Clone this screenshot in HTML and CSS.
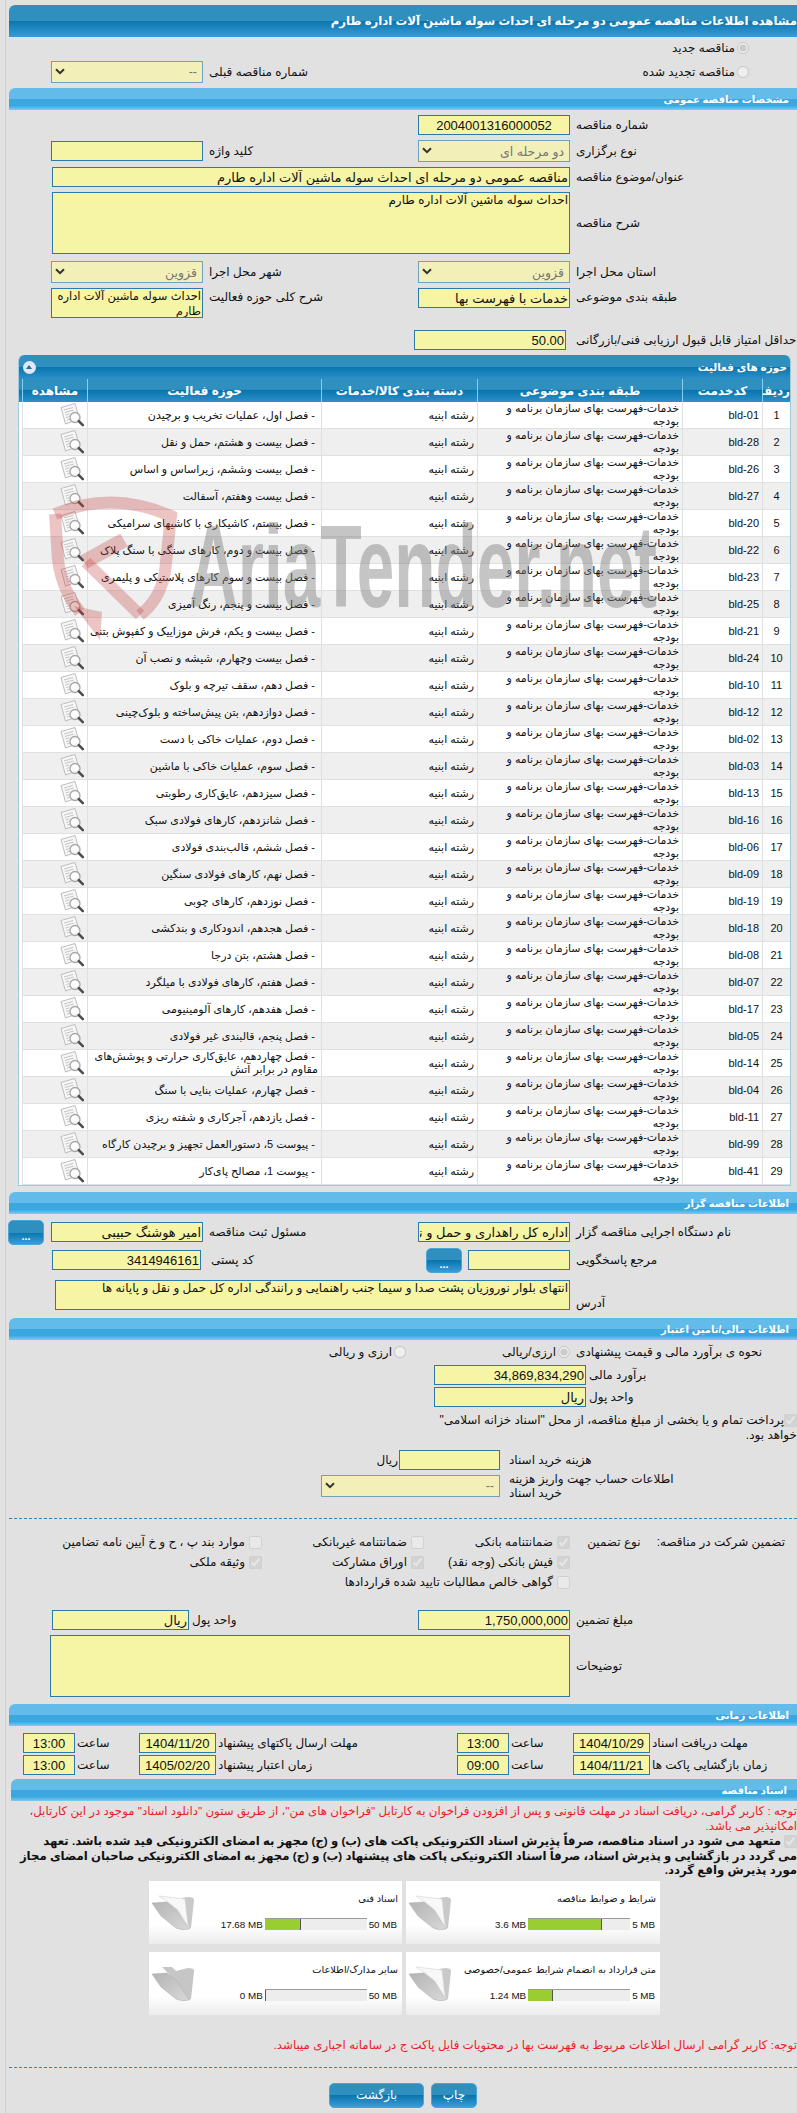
FILE: index.html
```html
<!DOCTYPE html>
<html lang="fa" dir="rtl">
<head>
<meta charset="utf-8">
<title>مشاهده اطلاعات مناقصه</title>
<link rel="stylesheet" href="styles.css">
</head>
<body>
<svg class="defs" width="0" height="0" aria-hidden="true">
  <defs>
    <linearGradient id="leaf" x1="0" y1="0" x2="1" y2="1"><stop offset="0" stop-color="#b4b4b4"/><stop offset="1" stop-color="#d8d8d8"/></linearGradient>
    <symbol id="mag" viewBox="0 0 24 24">
      <path d="M1 4.500 15 .5l4.500 15.500L5.500 21z" fill="#f7f7f7" stroke="#bdbdbd"/>
      <path d="M4 7l9-2.500M4.800 9.500l9-2.500M5.500 12l4-1.200M6.200 14.500l3-.8M7 17l3-.8" stroke="#c4c4c4" fill="none"/>
      <circle cx="15" cy="14.500" r="5" fill="#ffffff" fill-opacity=".75" stroke="#a5a5a5" stroke-width="1.300"/>
      <path d="M18.800 18.200l4 4" stroke="#4c4c4c" stroke-width="2.600" stroke-linecap="round"/>
    </symbol>
    <symbol id="folder" viewBox="0 0 42 38">
      <path d="M30 4l6-1q6 0 6 3l-3 28-2 1z" fill="#c9c9c9"/>
      <path d="M7 2l26 3 3 27-10-16L16 8z" fill="#f8f8f8" stroke="#d4d4d4" stroke-width=".6"/>
      <path d="M0 9l15-1 10 8 12 19q-7 2-13-1L9 22z" fill="url(#leaf)" stroke="#aaa" stroke-width=".5"/>
    </symbol>
    <symbol id="folder-empty" viewBox="0 0 42 38">
      <path d="M10 2h10l4 4 12-3q7 0 6 4l-3 27-2 1L16 8z" fill="#c6c6c6"/>
      <path d="M0 9l15-1 10 8 12 19q-7 2-13-1L9 22z" fill="url(#leaf)" stroke="#aaa" stroke-width=".5"/>
    </symbol>
    <symbol id="chev" viewBox="0 0 10 7">
      <path d="M1 1.200 5 5.200l4-4" fill="none" stroke="#333" stroke-width="2"/>
    </symbol>
  </defs>
</svg>

<div class="page">
  <h1 class="title-bar">مشاهده اطلاعات مناقصه عمومی دو مرحله ای احداث سوله ماشین آلات اداره طارم</h1>

  <div class="row mt1 h20">
    <label class="opt opt-top"><input type="radio" name="tn" checked disabled><span>مناقصه جدید</span></label>
  </div>
  <div class="row mt3 h22">
    <label class="opt opt-top"><input type="radio" name="tn" disabled><span>مناقصه تجدید شده</span></label>
    <span class="lbl lbl-prev">شماره مناقصه قبلی</span>
    <div class="sel w152 gap6"><span>--</span><svg class="chev"><use href="#chev"/></svg></div>
  </div>

  <h2 class="bar mt-bar5">مشخصات مناقصه عمومی</h2>

  <div class="row mt5 h20">
    <span class="lbl lbl-r">شماره مناقصه</span>
    <input class="fld w152 gap6 center" value="2004001316000052" readonly>
  </div>
  <div class="row mt5 h22">
    <span class="lbl lbl-r">نوع برگزاری</span>
    <div class="sel w152 gap6"><span>دو مرحله ای</span><svg class="chev"><use href="#chev"/></svg></div>
    <span class="lbl lbl-l">کلید واژه</span>
    <input class="fld w152 gap6" value="" readonly>
  </div>
  <div class="row mt5 h20">
    <span class="lbl lbl-r">عنوان/موضوع مناقصه</span>
    <input class="fld w518 gap6" value="مناقصه عمومی دو مرحله ای احداث سوله ماشین آلات اداره طارم" readonly>
  </div>
  <div class="row mt5 h62">
    <span class="lbl lbl-r">شرح مناقصه</span>
    <textarea class="fld area w518 gap6" readonly>احداث سوله ماشین آلات اداره طارم</textarea>
  </div>
  <div class="row mt7 h22">
    <span class="lbl lbl-r">استان محل اجرا</span>
    <div class="sel w152 gap6"><span>قزوین</span><svg class="chev"><use href="#chev"/></svg></div>
    <span class="lbl lbl-l">شهر محل اجرا</span>
    <div class="sel w152 gap6"><span>قزوین</span><svg class="chev"><use href="#chev"/></svg></div>
  </div>
  <div class="row mt5 h30 top">
    <span class="lbl lbl-r lbl-top">طبقه بندی موضوعی</span>
    <input class="fld w152 gap6" value="خدمات با فهرست بها" readonly>
    <span class="lbl lbl-l lbl-top">شرح کلی حوزه فعالیت</span>
    <textarea class="fld area small w152 h30 gap6" readonly>احداث سوله ماشین آلات اداره طارم</textarea>
  </div>
  <div class="row mt12 h20">
    <span class="lbl lbl-r">حداقل امتیاز قابل قبول ارزیابی فنی/بازرگانی</span>
    <input class="fld w152 gap10" value="50.00" readonly>
  </div>

  <section class="panel">
    <div class="panel-title">
      <span>حوزه های فعالیت</span>
      <span class="toggle"></span>
    </div>
    <table class="grid">
      <colgroup><col class="c1"><col class="c2"><col class="c3"><col class="c4"><col class="c5"><col class="c6"></colgroup>
      <thead><tr><th>ردیف</th><th>کدخدمت</th><th>طبقه بندی موضوعی</th><th>دسته بندی کالا/خدمات</th><th>حوزه فعالیت</th><th>مشاهده</th></tr></thead>
      <tbody>
        <tr><td class="n">1</td><td class="k">bld-01</td><td>خدمات-فهرست بهای سازمان برنامه و بودجه</td><td>رشته ابنیه</td><td>&nbsp;- فصل اول، عملیات تخریب و برچیدن</td><td class="v"><svg class="mag"><use href="#mag"/></svg></td></tr>
        <tr><td class="n">2</td><td class="k">bld-28</td><td>خدمات-فهرست بهای سازمان برنامه و بودجه</td><td>رشته ابنیه</td><td>&nbsp;- فصل بیست و هشتم، حمل و نقل</td><td class="v"><svg class="mag"><use href="#mag"/></svg></td></tr>
        <tr><td class="n">3</td><td class="k">bld-26</td><td>خدمات-فهرست بهای سازمان برنامه و بودجه</td><td>رشته ابنیه</td><td>&nbsp;- فصل بیست وششم، زیراساس و اساس</td><td class="v"><svg class="mag"><use href="#mag"/></svg></td></tr>
        <tr><td class="n">4</td><td class="k">bld-27</td><td>خدمات-فهرست بهای سازمان برنامه و بودجه</td><td>رشته ابنیه</td><td>&nbsp;- فصل بیست وهفتم، آسفالت</td><td class="v"><svg class="mag"><use href="#mag"/></svg></td></tr>
        <tr><td class="n">5</td><td class="k">bld-20</td><td>خدمات-فهرست بهای سازمان برنامه و بودجه</td><td>رشته ابنیه</td><td>&nbsp;- فصل بیستم، کاشیکاری با کاشیهای سرامیکی</td><td class="v"><svg class="mag"><use href="#mag"/></svg></td></tr>
        <tr><td class="n">6</td><td class="k">bld-22</td><td>خدمات-فهرست بهای سازمان برنامه و بودجه</td><td>رشته ابنیه</td><td>&nbsp;- فصل بیست و دوم، کارهای سنگی با سنگ پلاک</td><td class="v"><svg class="mag"><use href="#mag"/></svg></td></tr>
        <tr><td class="n">7</td><td class="k">bld-23</td><td>خدمات-فهرست بهای سازمان برنامه و بودجه</td><td>رشته ابنیه</td><td>&nbsp;- فصل بیست و سوم کارهای پلاستیکی و پلیمری</td><td class="v"><svg class="mag"><use href="#mag"/></svg></td></tr>
        <tr><td class="n">8</td><td class="k">bld-25</td><td>خدمات-فهرست بهای سازمان برنامه و بودجه</td><td>رشته ابنیه</td><td>&nbsp;- فصل بیست و پنجم، رنگ آمیزی</td><td class="v"><svg class="mag"><use href="#mag"/></svg></td></tr>
        <tr><td class="n">9</td><td class="k">bld-21</td><td>خدمات-فهرست بهای سازمان برنامه و بودجه</td><td>رشته ابنیه</td><td>&nbsp;- فصل بیست و یکم، فرش موزاییک و کفپوش بتنی</td><td class="v"><svg class="mag"><use href="#mag"/></svg></td></tr>
        <tr><td class="n">10</td><td class="k">bld-24</td><td>خدمات-فهرست بهای سازمان برنامه و بودجه</td><td>رشته ابنیه</td><td>&nbsp;- فصل بیست وچهارم، شیشه و نصب آن</td><td class="v"><svg class="mag"><use href="#mag"/></svg></td></tr>
        <tr><td class="n">11</td><td class="k">bld-10</td><td>خدمات-فهرست بهای سازمان برنامه و بودجه</td><td>رشته ابنیه</td><td>&nbsp;- فصل دهم، سقف تیرچه و بلوک</td><td class="v"><svg class="mag"><use href="#mag"/></svg></td></tr>
        <tr><td class="n">12</td><td class="k">bld-12</td><td>خدمات-فهرست بهای سازمان برنامه و بودجه</td><td>رشته ابنیه</td><td>&nbsp;- فصل دوازدهم، بتن پیش‌ساخته و بلوک‌چینی</td><td class="v"><svg class="mag"><use href="#mag"/></svg></td></tr>
        <tr><td class="n">13</td><td class="k">bld-02</td><td>خدمات-فهرست بهای سازمان برنامه و بودجه</td><td>رشته ابنیه</td><td>&nbsp;- فصل دوم، عملیات خاکی با دست</td><td class="v"><svg class="mag"><use href="#mag"/></svg></td></tr>
        <tr><td class="n">14</td><td class="k">bld-03</td><td>خدمات-فهرست بهای سازمان برنامه و بودجه</td><td>رشته ابنیه</td><td>&nbsp;- فصل سوم، عملیات خاکی با ماشین</td><td class="v"><svg class="mag"><use href="#mag"/></svg></td></tr>
        <tr><td class="n">15</td><td class="k">bld-13</td><td>خدمات-فهرست بهای سازمان برنامه و بودجه</td><td>رشته ابنیه</td><td>&nbsp;- فصل سیزدهم، عایق‌کاری رطوبتی</td><td class="v"><svg class="mag"><use href="#mag"/></svg></td></tr>
        <tr><td class="n">16</td><td class="k">bld-16</td><td>خدمات-فهرست بهای سازمان برنامه و بودجه</td><td>رشته ابنیه</td><td>&nbsp;- فصل شانزدهم، کارهای فولادی سبک</td><td class="v"><svg class="mag"><use href="#mag"/></svg></td></tr>
        <tr><td class="n">17</td><td class="k">bld-06</td><td>خدمات-فهرست بهای سازمان برنامه و بودجه</td><td>رشته ابنیه</td><td>&nbsp;- فصل ششم، قالب‌بندی فولادی</td><td class="v"><svg class="mag"><use href="#mag"/></svg></td></tr>
        <tr><td class="n">18</td><td class="k">bld-09</td><td>خدمات-فهرست بهای سازمان برنامه و بودجه</td><td>رشته ابنیه</td><td>&nbsp;- فصل نهم، کارهای فولادی سنگین</td><td class="v"><svg class="mag"><use href="#mag"/></svg></td></tr>
        <tr><td class="n">19</td><td class="k">bld-19</td><td>خدمات-فهرست بهای سازمان برنامه و بودجه</td><td>رشته ابنیه</td><td>&nbsp;- فصل نوزدهم، کارهای چوبی</td><td class="v"><svg class="mag"><use href="#mag"/></svg></td></tr>
        <tr><td class="n">20</td><td class="k">bld-18</td><td>خدمات-فهرست بهای سازمان برنامه و بودجه</td><td>رشته ابنیه</td><td>&nbsp;- فصل هجدهم، اندودکاری و بندکشی</td><td class="v"><svg class="mag"><use href="#mag"/></svg></td></tr>
        <tr><td class="n">21</td><td class="k">bld-08</td><td>خدمات-فهرست بهای سازمان برنامه و بودجه</td><td>رشته ابنیه</td><td>&nbsp;- فصل هشتم، بتن درجا</td><td class="v"><svg class="mag"><use href="#mag"/></svg></td></tr>
        <tr><td class="n">22</td><td class="k">bld-07</td><td>خدمات-فهرست بهای سازمان برنامه و بودجه</td><td>رشته ابنیه</td><td>&nbsp;- فصل هفتم، کارهای فولادی با میلگرد</td><td class="v"><svg class="mag"><use href="#mag"/></svg></td></tr>
        <tr><td class="n">23</td><td class="k">bld-17</td><td>خدمات-فهرست بهای سازمان برنامه و بودجه</td><td>رشته ابنیه</td><td>&nbsp;- فصل هفدهم، کارهای آلومینیومی</td><td class="v"><svg class="mag"><use href="#mag"/></svg></td></tr>
        <tr><td class="n">24</td><td class="k">bld-05</td><td>خدمات-فهرست بهای سازمان برنامه و بودجه</td><td>رشته ابنیه</td><td>&nbsp;- فصل پنجم، قالبندی غیر فولادی</td><td class="v"><svg class="mag"><use href="#mag"/></svg></td></tr>
        <tr><td class="n">25</td><td class="k">bld-14</td><td>خدمات-فهرست بهای سازمان برنامه و بودجه</td><td>رشته ابنیه</td><td>&nbsp;- فصل چهاردهم، عایق‌کاری حرارتی و پوشش‌های مقاوم در برابر آتش</td><td class="v"><svg class="mag"><use href="#mag"/></svg></td></tr>
        <tr><td class="n">26</td><td class="k">bld-04</td><td>خدمات-فهرست بهای سازمان برنامه و بودجه</td><td>رشته ابنیه</td><td>&nbsp;- فصل چهارم، عملیات بنایی با سنگ</td><td class="v"><svg class="mag"><use href="#mag"/></svg></td></tr>
        <tr><td class="n">27</td><td class="k">bld-11</td><td>خدمات-فهرست بهای سازمان برنامه و بودجه</td><td>رشته ابنیه</td><td>&nbsp;- فصل یازدهم، آجرکاری و شفته ریزی</td><td class="v"><svg class="mag"><use href="#mag"/></svg></td></tr>
        <tr><td class="n">28</td><td class="k">bld-99</td><td>خدمات-فهرست بهای سازمان برنامه و بودجه</td><td>رشته ابنیه</td><td>&nbsp;- پیوست 5، دستورالعمل تجهیز و برچیدن کارگاه</td><td class="v"><svg class="mag"><use href="#mag"/></svg></td></tr>
        <tr><td class="n">29</td><td class="k">bld-41</td><td>خدمات-فهرست بهای سازمان برنامه و بودجه</td><td>رشته ابنیه</td><td>&nbsp;- پیوست 1، مصالح پای‌کار</td><td class="v"><svg class="mag"><use href="#mag"/></svg></td></tr>
      </tbody>
    </table>
  </section>

  <h2 class="bar mt-bar6">اطلاعات مناقصه گزار</h2>

  <div class="row mt8 h20">
    <span class="lbl lbl-r">نام دستگاه اجرایی مناقصه گزار</span>
    <input class="fld w152 gap6" value="اداره کل راهداری و حمل و نقل جاده ای استان قزوین" readonly>
    <span class="lbl lbl-l">مسئول ثبت مناقصه</span>
    <input class="fld w152 gap6" value="امیر هوشنگ حبیبی" readonly>
    <button class="btn btn-dots gap7" type="button">...</button>
  </div>
  <div class="row mt8 h20">
    <span class="lbl lbl-r">مرجع پاسخگویی</span>
    <input class="fld w102 gap6" value="" readonly>
    <button class="btn btn-dots gap6" type="button">...</button>
    <span class="lbl lbl-post">کد پستی</span>
    <input class="fld w149 gap10" value="3414946161" readonly>
  </div>
  <div class="row mt10 h30">
    <span class="lbl lbl-r lbl-low">آدرس</span>
    <textarea class="fld area w515 h30 gap6" readonly>انتهای بلوار نوروزیان پشت صدا و سیما جنب راهنمایی و رانندگی اداره کل حمل و نقل و پایانه ها</textarea>
  </div>

  <h2 class="bar mt-bar8">اطلاعات مالی/تامین اعتبار</h2>

  <div class="row mt2 h20">
    <span class="lbl lbl-r">نحوه ی برآورد مالی و قیمت پیشنهادی</span>
    <label class="opt gap6 opt-w164"><input type="radio" name="cur" checked disabled><span>ارزی/ریالی</span></label>
    <label class="opt"><input type="radio" name="cur" disabled><span>ارزی و ریالی</span></label>
  </div>
  <div class="row mt3 h20">
    <span class="lbl lbl-r2">برآورد مالی</span>
    <input class="fld w152 gap3" value="34,869,834,290" readonly>
  </div>
  <div class="row mt2 h20">
    <span class="lbl lbl-r2">واحد پول</span>
    <input class="fld w152 gap3" value="ریال" readonly>
  </div>
  <p class="para treasury"><input class="cb" type="checkbox" checked disabled>پرداخت تمام و یا بخشی از مبلغ مناقصه، از محل "اسناد خزانه اسلامی" خواهد بود.</p>
  <div class="row mt7 h20">
    <span class="lbl lbl-r3">هزینه خرید اسناد</span>
    <input class="fld w101 gap9" value="" readonly>
    <span class="suffix">ریال</span>
  </div>
  <div class="row mt5 h22">
    <span class="lbl lbl-r3 lbl-two"><span class="two">اطلاعات حساب جهت واریز هزینه خرید اسناد</span></span>
    <div class="sel w179 gap9"><span>--</span><svg class="chev"><use href="#chev"/></svg></div>
  </div>

  <hr class="dash mt-d21">

  <div class="guar">
    <div class="g-head"><span>تضمین شرکت در مناقصه:</span><span>نوع تضمین</span></div>
    <label class="chk"><input class="cb" type="checkbox" checked disabled>ضمانتنامه بانکی</label>
    <label class="chk"><input class="cb" type="checkbox" disabled>ضمانتنامه غیربانکی</label>
    <label class="chk"><input class="cb" type="checkbox" disabled>موارد بند پ ، ح و خ آیین نامه تضامین</label>
    <span></span>
    <label class="chk"><input class="cb" type="checkbox" checked disabled>فیش بانکی (وجه نقد)</label>
    <label class="chk"><input class="cb" type="checkbox" checked disabled>اوراق مشارکت</label>
    <label class="chk"><input class="cb" type="checkbox" checked disabled>وثیقه ملکی</label>
    <span></span>
    <label class="chk g-span"><input class="cb" type="checkbox" disabled>گواهی خالص مطالبات تایید شده قراردادها</label>
  </div>

  <div class="row mt18 h20">
    <span class="lbl lbl-r">مبلغ تضمین</span>
    <input class="fld w152 gap6" value="1,750,000,000" readonly>
    <span class="lbl lbl-unit">واحد پول</span>
    <input class="fld w137 gap3" value="ریال" readonly>
  </div>
  <div class="row mt5 h62">
    <span class="lbl lbl-r">توضیحات</span>
    <textarea class="fld area w520 gap6" readonly></textarea>
  </div>

  <h2 class="bar mt-bar7">اطلاعات زمانی</h2>

  <div class="dates mt7">
    <span class="lbl d-l1">مهلت دریافت اسناد</span>
    <input class="fld center w77" value="1404/10/29" readonly>
    <span class="lbl d-h">ساعت</span>
    <input class="fld center w52" value="13:00" readonly>
    <span class="lbl d-l2">مهلت ارسال پاکتهای پیشنهاد</span>
    <input class="fld center w77" value="1404/11/20" readonly>
    <span class="lbl d-h">ساعت</span>
    <input class="fld center w52" value="13:00" readonly>
  </div>
  <div class="dates mt2">
    <span class="lbl d-l1">زمان بازگشایی پاکت ها</span>
    <input class="fld center w77" value="1404/11/21" readonly>
    <span class="lbl d-h">ساعت</span>
    <input class="fld center w52" value="09:00" readonly>
    <span class="lbl d-l2">زمان اعتبار پیشنهاد</span>
    <input class="fld center w77" value="1405/02/20" readonly>
    <span class="lbl d-h">ساعت</span>
    <input class="fld center w52" value="13:00" readonly>
  </div>

  <h2 class="bar bar-narrow mt-bar4">اسناد مناقصه</h2>

  <p class="para red notice">توجه : کاربر گرامی، دریافت اسناد در مهلت قانونی و پس از افزودن فراخوان به کارتابل "فراخوان های من"، از طریق ستون "دانلود اسناد" موجود در این کارتابل، امکانپذیر می باشد.</p>
  <p class="para pledge"><input class="cb" type="checkbox" checked disabled>متعهد می شود در اسناد مناقصه، صرفاً پذیرش اسناد الکترونیکی پاکت های (ب) و (ج) مجهز به امضای الکترونیکی قید شده باشد. تعهد می&nbsp;گردد در بازگشایی و پذیرش اسناد، صرفاً اسناد الکترونیکی پاکت های پیشنهاد (ب) و (ج) مجهز به امضای الکترونیکی صاحبان امضای مجاز مورد پذیرش واقع گردد.</p>

  <div class="cards">
    <div class="card">
      <div class="card-main">
        <div class="card-title">شرایط و ضوابط مناقصه</div>
        <div class="meter"><span class="cap">5 MB</span><span class="track"><span class="fill" style="width:72%"></span></span><span class="used">3.6 MB</span></div>
      </div>
      <svg class="folder"><use href="#folder"/></svg>
    </div>
    <div class="card">
      <div class="card-main">
        <div class="card-title">اسناد فنی</div>
        <div class="meter"><span class="cap">50 MB</span><span class="track"><span class="fill" style="width:35.400%"></span></span><span class="used">17.68 MB</span></div>
      </div>
      <svg class="folder"><use href="#folder"/></svg>
    </div>
    <div class="card">
      <div class="card-main">
        <div class="card-title">متن قرارداد به انضمام شرایط عمومی/خصوصی</div>
        <div class="meter"><span class="cap">5 MB</span><span class="track"><span class="fill" style="width:24.800%"></span></span><span class="used">1.24 MB</span></div>
      </div>
      <svg class="folder"><use href="#folder"/></svg>
    </div>
    <div class="card">
      <div class="card-main">
        <div class="card-title">سایر مدارک/اطلاعات</div>
        <div class="meter"><span class="cap">50 MB</span><span class="track"><span class="fill" style="width:0%"></span></span><span class="used">0 MB</span></div>
      </div>
      <svg class="folder"><use href="#folder-empty"/></svg>
    </div>
  </div>

  <p class="para red note2">توجه: کاربر گرامی ارسال اطلاعات مربوط به فهرست بها در محتویات فایل پاکت ج در سامانه اجباری میباشد.</p>

  <hr class="dash mt-d14">

  <div class="actions">
    <button class="btn btn-act btn-print" type="button">چاپ</button>
    <button class="btn btn-act btn-back" type="button">بازگشت</button>
  </div>
</div>

<svg class="watermark" width="797" height="2113" viewBox="0 0 797 2113" aria-hidden="true">
  <g fill="none" stroke="#c43c3c" stroke-opacity=".3" stroke-width="12">
    <path d="M55 514Q112 490 171 516L165 572Q160 600 140 615"/>
    <path d="M55 514L58 560Q62 590 80 612"/>
    <path d="M86 562L140 615"/>
    <path d="M84 562L124 540" stroke-width="15"/>
  </g>
  <path d="M74 606L100 640L102 612Z" fill="#c43c3c" fill-opacity=".3"/>
  <text x="189" y="607" font-size="117" font-weight="700" textLength="468" lengthAdjust="spacingAndGlyphs" class="wm-text">AriaTender.net</text>
</svg>
</body>
</html>
```

FILE: styles.css
```css
* { box-sizing: border-box; }
html, body { margin: 0; padding: 0; }
body {
  position: relative;
  width: 797px;
  height: 2113px;
  overflow: hidden;
  background: #e1e1e1;
  color: #111;
  font-family: "Liberation Sans", "DejaVu Sans", sans-serif;
  font-size: 12px;
}
.defs { position: absolute; }

.page {
  width: 792px;
  height: 2113px;
  margin: 0 0 0 5px;
  padding-left: 3px;
  border-left: 1px solid #cfcfcf;
  overflow: hidden;
}

.title-bar, .btn {
  background: linear-gradient(#2f8fbf 0, #2f8fbf 50%, #0a75ad 50%, #3a9cd8 100%);
}
.title-bar {
  margin: 5px 0 0;
  height: 32px;
  line-height: 31px;
  padding: 0;
  color: #fff;
  font-size: 11.700px;
  font-weight: 700;
  white-space: nowrap;
  overflow: hidden;
  border-top-left-radius: 6px;
}
.bar {
  margin: 0;
  height: 22px;
  line-height: 23px;
  padding-right: 8px;
  color: #fff;
  font-size: 10px;
  font-weight: 700;
  background: linear-gradient(#63bbea 0, #63bbea 50%, #3ba7e1 50%, #3ba7e1 80%, #83c9ee 100%);
  border-top-left-radius: 6px;
}
.bar-narrow { margin-left: 2px; padding-right: 10px; }
.mt-bar5 { margin-top: 5px; }
.mt-bar6 { margin-top: 6px; }
.mt-bar8 { margin-top: 8px; }
.mt-bar7 { margin-top: 7px; }
.mt-bar4 { margin-top: 4px; }

.row { display: flex; align-items: center; }
.row.top { align-items: flex-start; }
.mt1 { margin-top: 1px; } .mt2 { margin-top: 2px; } .mt3 { margin-top: 3px; }
.mt5 { margin-top: 5px; } .mt7 { margin-top: 7px; } .mt8 { margin-top: 8px; }
.mt10 { margin-top: 10px; } .mt12 { margin-top: 12px; } .mt18 { margin-top: 18px; }
.h20 { height: 20px; } .h22 { height: 22px; } .h30 { height: 30px; } .h62 { height: 62px; }

.lbl { display: block; text-align: left; white-space: nowrap; flex: none; }
.lbl-r { width: 221px; }
.lbl-r2 { width: 208px; }
.lbl-r3 { width: 288px; }
.lbl-l { width: 209px; }
.lbl-top { align-self: flex-start; margin-top: 2px; }
.lbl-low { align-self: flex-end; }
.lbl-post { width: 215px; }
.lbl-prev { width: 367px; }
.lbl-unit { width: 226px; }
.lbl-two { align-self: center; white-space: normal; line-height: 14px; }
.two { display: block; width: 170px; margin-right: 118px; text-align: left; }
.suffix { flex: none; margin-right: 1px; }

.fld {
  display: block;
  flex: none;
  height: 20px;
  padding: 0 1px;
  margin-top: 0;
  margin-bottom: 0;
  background: #f6f4a5;
  border: 1px solid #2d79ab;
  border-radius: 0;
  outline: 0;
  color: #111;
  font-family: inherit;
  font-size: 13px;
  direction: rtl;
  text-align: right;
}
.center { text-align: center; }
.area { height: 62px; padding: 0 1px; line-height: 14px; resize: none; overflow: hidden; white-space: pre-wrap; font-size: 12px; }
.area.h30, .h30 .area { height: 30px; }
.area.small { line-height: 15px; font-size: 11.500px; }

.sel {
  display: flex;
  flex: none;
  align-items: center;
  justify-content: space-between;
  height: 22px;
  padding: 0 5px 0 3px;
  background: #f2efb8;
  border: 1px solid #6fa0bf;
  color: #777;
  font-size: 12.500px;
}
.chev { width: 10px; height: 7px; margin-bottom: 2px; flex: none; }

.w77 { width: 77px; } .w52 { width: 52px; }
.w101 { width: 101px; } .w102 { width: 102px; } .w137 { width: 137px; } .w149 { width: 149px; }
.w152 { width: 152px; } .w179 { width: 179px; }
.w515 { width: 515px; } .w518 { width: 518px; } .w520 { width: 520px; }
.gap3 { margin-right: 3px; } .gap6 { margin-right: 6px; } .gap7 { margin-right: 7px; }
.gap9 { margin-right: 9px; } .gap10 { margin-right: 10px; }

.opt { display: flex; align-items: center; flex: none; white-space: nowrap; }
.opt input { width: 12px; height: 12px; margin: 0 0 0 2px; flex: none; }
.opt-top { width: 173px; margin-right: 48px; }
.opt-w164 { width: 164px; }

.panel {
  width: 773px;
  margin: 5px 6px 0 0;
  padding-left: 3px;
  background:
    linear-gradient(#2f8fbf 0, #2f8fbf 50%, #0a75ad 50%, #2d8fca 100%) 0 0 / 100% 24px no-repeat,
    linear-gradient(#2f8fbf 0, #2f8fbf 45%, #0a75ad 50%, #2d8fca 100%) 0 24px / 100% 23px no-repeat,
    #fff;
  border: 1px solid #a3c9df;
  border-top: 0;
  border-top-left-radius: 6px;
  border-top-right-radius: 6px;
}
.panel-title {
  display: flex;
  align-items: center;
  justify-content: space-between;
  height: 24px;
  padding: 0 3px 0 1px;
  color: #fff;
  font-weight: 700;
  font-size: 10.500px;
}
.toggle {
  position: relative;
  width: 13px;
  height: 13px;
  border-radius: 50%;
  background: #dfe8f3;
}
.toggle::after {
  content: "";
  position: absolute;
  top: 4px;
  left: 3px;
  border-left: 3.500px solid transparent;
  border-right: 3.500px solid transparent;
  border-bottom: 4px solid #1c6d9e;
}
.grid { width: 768px; border-collapse: separate; border-spacing: 0; table-layout: fixed; font-size: 11px; }
.c1 { width: 28px; } .c2 { width: 80px; } .c3 { width: 205px; }
.c4 { width: 156px; } .c5 { width: 234px; } .c6 { width: 65px; }
.grid th {
  height: 23px;
  padding: 0;
  color: #fff;
  font-weight: 700;
  font-size: 12px;
  text-align: center;
  white-space: nowrap;
  overflow: hidden;
  border-left: 1px solid #82d1f2;
}
.grid td {
  height: 27px;
  padding: 0 3px 0 0;
  line-height: 13px;
  text-align: right;
  border-left: 1px solid #e0e0e0;
  border-bottom: 1px solid #e0e0e0;
  overflow: hidden;
}
.grid tbody tr:nth-child(even) td { background: #efefef; }
.grid td.n { padding: 0; text-align: center; }
.grid td.v { vertical-align: middle; }
.mag { display: block; width: 24px; height: 24px; }

.btn {
  flex: none;
  border: 1px solid #4aa4dc;
  border-radius: 5px;
  color: #fff;
  font-family: inherit;
  font-size: 12px;
  cursor: default;
}
.btn-dots { width: 36px; height: 25px; padding: 8px 0 0; font-weight: 700; font-size: 11px; line-height: 12px; }

.para { margin: 0; }
.cb { width: 13px; height: 13px; margin: 0; flex: none; opacity: .6; vertical-align: middle; }
.treasury { width: 364px; margin-top: 6px; line-height: 15px; height: 30px; }

.dash { margin: 0; border: 0; border-top: 1px dashed #2f86b6; height: 0; }
.mt-d21 { margin-top: 21px; }
.mt-d14 { margin-top: 14px; }

.guar {
  display: grid;
  grid-template-columns: 227px 146px 162px 1fr;
  grid-auto-rows: 20px;
  margin-top: 13px;
  align-items: center;
}
.g-head { display: flex; gap: 16px; padding-right: 12px; white-space: nowrap; }
.chk { display: flex; align-items: center; gap: 4px; white-space: nowrap; }
.g-span { grid-column: 2 / span 3; }

.dates { display: flex; align-items: center; gap: 2px; height: 20px; }
.d-l1 { width: 145px; }
.d-l2 { width: 237px; }
.d-h { width: 60px; }

.red { color: #ee1c25; }
.notice { margin-top: 3px; height: 30px; line-height: 15px; font-size: 11.800px; }
.pledge { font-weight: 700; font-size: 11.700px; line-height: 14.500px; height: 44px; margin-left: 2px; }
.pledge .cb { margin-left: 3px; }

.cards {
  display: grid;
  grid-template-columns: 254px 253px;
  grid-auto-rows: 63px;
  column-gap: 4px;
  row-gap: 8px;
  margin: 3px 137px 0 0;
}
.card {
  display: flex;
  justify-content: space-between;
  padding: 0 4px 0 3px;
  background: linear-gradient(#fff 0, #fff 70%, #ececec 100%);
}
.card-main { flex: 1; font-size: 9.800px; }
.card-title { height: 37px; padding-top: 11px; line-height: 14px; white-space: nowrap; text-align: right; }
.meter { display: flex; align-items: center; height: 12px; white-space: nowrap; }
.cap { padding-right: 1px; margin-left: 2px; direction: ltr; flex: none; }
.used { margin-right: 2px; direction: ltr; }
.track {
  display: flex;
  direction: ltr;
  width: 102px;
  height: 12px;
  flex: none;
  background: #ededed;
  border-top: 1px solid #999;
}
.fill { height: 11px; background: #9acd32; border-right: 1px solid #555; min-width: 1px; }
.folder { width: 42px; height: 38px; margin-top: 13px; flex: none; }

.note2 { margin-top: 23px; line-height: 15px; height: 15px; font-size: 11.800px; }

.actions { display: flex; gap: 7px; margin: 15px 320px 0 0; }
.btn-act { height: 25px; padding: 0 0 2px; }
.btn-print { width: 46px; }
.btn-back { width: 95px; }

.watermark { position: absolute; top: 0; left: 0; pointer-events: none; direction: ltr; }
.wm-text { fill: #808080; fill-opacity: .46; font-family: "Liberation Sans", sans-serif; }
```
